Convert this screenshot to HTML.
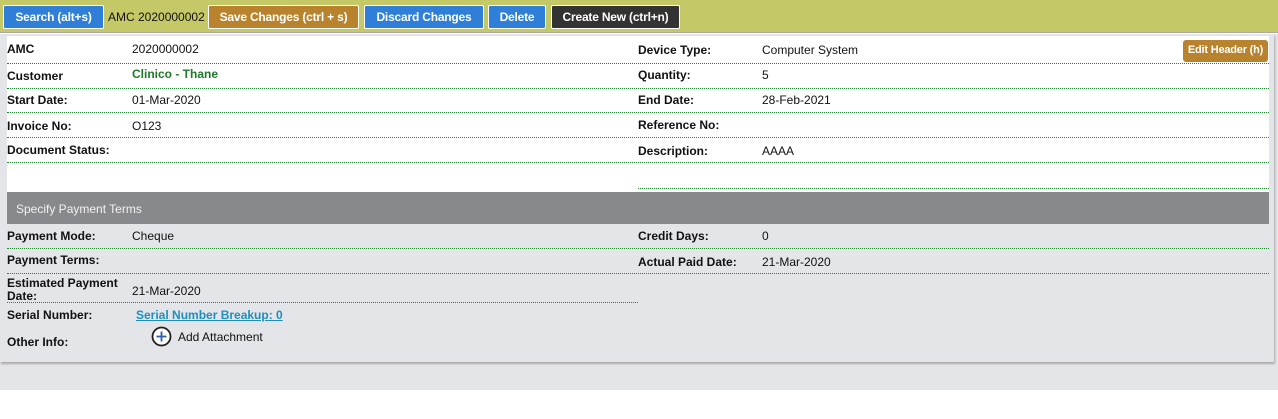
<!DOCTYPE html>
<html><head><style>
*{margin:0;padding:0;box-sizing:border-box}
body{width:1278px;height:419px;background:#fff;font-family:"Liberation Sans",Arial,sans-serif;font-size:12px;color:#111;position:relative;overflow:hidden}
.top{position:absolute;left:0;top:0;width:1278px;height:33px;background:#c5c867;border-bottom:1px solid #a9a9a0}
.btn{position:absolute;top:5px;height:24px;line-height:22px;color:#fff;font-weight:bold;font-size:12px;text-align:center;border:1px solid #fff;border-radius:2px;white-space:nowrap;letter-spacing:-0.2px}
.bg{position:absolute;left:0;top:34px;width:1278px;height:356px;background:#e4e5e9}
.panel{position:absolute;left:0;top:34px;width:1274px;height:328px;background:#e4e5e9;box-shadow:1px 2px 2px #aaa}
.white{position:absolute;left:7px;top:36px;width:1262px;height:156px;background:#fff}
.bar{position:absolute;left:7px;top:192px;width:1262px;height:32px;background:#88898d;color:#f2f2f2;font-size:12px;line-height:34px;padding-left:9px}
.l{position:absolute;font-weight:bold;white-space:nowrap}
.v{position:absolute;white-space:nowrap}
.line{position:absolute;height:0;border-top:1px dotted #1a8a2a}
</style></head><body>
<div class="top"></div>
<div class="btn" style="left:3px;width:101px;background:#2f7fd8">Search (alt+s)</div>
<div class="v" style="left:108px;top:10px;font-size:12px">AMC 2020000002</div>
<div class="btn" style="left:208px;width:151px;background:#b9832d">Save Changes (ctrl + s)</div>
<div class="btn" style="left:364px;width:120px;background:#2f7fd8">Discard Changes</div>
<div class="btn" style="left:488px;width:58px;background:#2f7fd8">Delete</div>
<div class="btn" style="left:551px;width:129px;background:#333">Create New (ctrl+n)</div>
<div class="bg"></div>
<div class="panel"></div>
<div class="white"></div>
<div class="btn" style="left:1183px;top:40px;width:85px;height:22px;line-height:20px;background:#b9832d;border:none;border-radius:3px;font-size:11px">Edit Header (h)</div>

<div class="l" style="left:7px;top:42px">AMC</div><div class="v" style="left:132px;top:42px">2020000002</div>
<div class="line" style="left:7px;top:63px;width:1262px"></div>
<div class="l" style="left:7px;top:69px">Customer</div><div class="v" style="left:132px;top:67px;color:#1e7a28;font-weight:bold">Clinico - Thane</div>
<div class="line" style="left:7px;top:88px;width:1262px"></div>
<div class="l" style="left:7px;top:93px">Start Date:</div><div class="v" style="left:132px;top:93px">01-Mar-2020</div>
<div class="line" style="left:7px;top:112px;width:1262px"></div>
<div class="l" style="left:7px;top:119px">Invoice No:</div><div class="v" style="left:132px;top:119px">O123</div>
<div class="line" style="left:7px;top:137px;width:1262px"></div>
<div class="l" style="left:7px;top:143px">Document Status:</div>
<div class="line" style="left:7px;top:162px;width:1262px"></div>
<div class="line" style="left:638px;top:188px;width:631px"></div>

<div class="l" style="left:638px;top:43px">Device Type:</div><div class="v" style="left:762px;top:43px">Computer System</div>
<div class="l" style="left:638px;top:68px">Quantity:</div><div class="v" style="left:762px;top:68px">5</div>
<div class="l" style="left:638px;top:93px">End Date:</div><div class="v" style="left:762px;top:93px">28-Feb-2021</div>
<div class="l" style="left:638px;top:118px">Reference No:</div>
<div class="l" style="left:638px;top:144px">Description:</div><div class="v" style="left:762px;top:144px">AAAA</div>

<div class="bar">Specify Payment Terms</div>

<div class="l" style="left:7px;top:229px">Payment Mode:</div><div class="v" style="left:132px;top:229px">Cheque</div>
<div class="line" style="left:7px;top:248px;width:1262px"></div>
<div class="l" style="left:7px;top:253px">Payment Terms:</div>
<div class="line" style="left:7px;top:273px;width:1262px"></div>
<div class="l" style="left:7px;top:277px;line-height:13px">Estimated Payment<br>Date:</div><div class="v" style="left:132px;top:284px">21-Mar-2020</div>
<div class="line" style="left:7px;top:302px;width:631px"></div>
<div class="l" style="left:638px;top:229px">Credit Days:</div><div class="v" style="left:762px;top:229px">0</div>
<div class="l" style="left:638px;top:255px">Actual Paid Date:</div><div class="v" style="left:762px;top:255px">21-Mar-2020</div>
<div class="l" style="left:7px;top:308px">Serial Number:</div>
<div class="v" style="left:136px;top:308px;color:#1c8fc0;font-weight:bold;text-decoration:underline">Serial Number Breakup: 0</div>
<div class="l" style="left:7px;top:335px">Other Info:</div>
<svg style="position:absolute;left:151px;top:326px" width="21" height="21" viewBox="0 0 21 21"><circle cx="10.5" cy="10.5" r="9" fill="#fff" stroke="#222" stroke-width="1.8"/><path d="M10.5 5.5v10M5.5 10.5h10" stroke="#2a5db0" stroke-width="1.8"/></svg>
<div class="v" style="left:178px;top:330px">Add Attachment</div>
</body></html>
